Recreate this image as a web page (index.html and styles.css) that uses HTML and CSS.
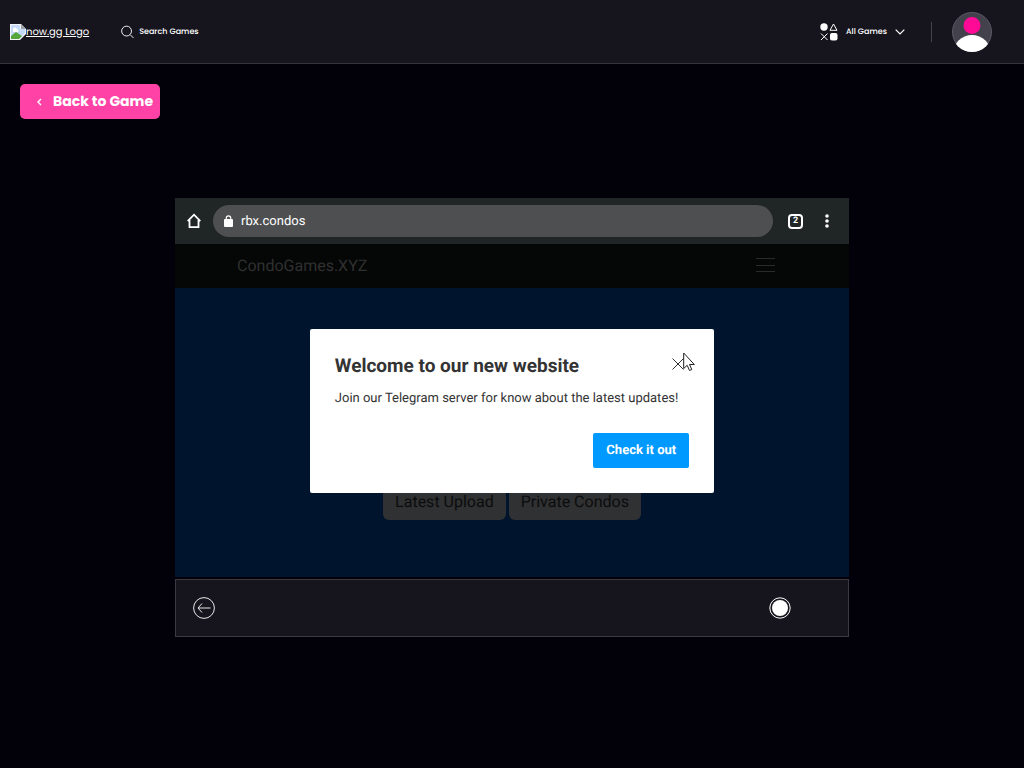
FILE: index.html
```html
<!DOCTYPE html>
<html lang="en">
<head>
<meta charset="UTF-8">
<meta name="viewport" content="width=device-width, initial-scale=1">
<title>now.gg</title>
<link rel="stylesheet" href="styles.css">
</head>
<body>
  <header class="topbar">
    <a class="logo" href="#">
      <svg width="16" height="16" viewBox="0 0 16 16" aria-hidden="true">
        <path d="M0 0h11l5 5v5l-6 6H0z" fill="#f1f3f4"/>
        <path d="M1 1h9v4h5v4l-6 6H1z" fill="#c3d9f5"/>
        <path d="M3 6a2 2 0 0 1 4-1 2 2 0 0 1 1 3H3z" fill="#fff"/>
        <path d="M1 15v-3l5-4 6 4-3 3z" fill="#57a63c"/>
        <path d="M11 0v5h5z" fill="#9aa0a6"/>
      </svg><span>now.gg Logo</span>
    </a>
    <label class="search">
      <svg width="13" height="14" viewBox="0 0 14 14" fill="none" stroke="#fff" aria-hidden="true">
        <circle cx="6" cy="6" r="5.3"/>
        <path d="M10 10l3.5 3.5"/>
      </svg>
      <input type="text" placeholder="Search Games" aria-label="Search Games">
    </label>
    <button class="all-games" type="button">
      <svg width="18" height="18" viewBox="0 0 18 18" aria-hidden="true">
        <circle cx="4" cy="4" r="3.7" fill="#fff"/>
        <path d="M13.5 1L17 7.3h-7z" fill="none" stroke="#fff" stroke-linejoin="round"/>
        <path d="M1 10.5l6.5 6.5M7.5 10.5L1 17" stroke="#fff"/>
        <rect x="10" y="10" width="7.5" height="7.5" rx="2" fill="#fff"/>
      </svg>
      All Games
      <svg width="10" height="6" viewBox="0 0 10 6" fill="none" stroke="#fff" stroke-width="1.2" aria-hidden="true">
        <path d="M.7.7L5 5 9.3.7"/>
      </svg>
    </button>
    <span class="divider"></span>
    <button class="avatar" type="button" aria-label="Account">
      <svg width="40" height="40" viewBox="0 0 40 40" aria-hidden="true">
        <clipPath id="avatar-clip"><circle cx="20" cy="20" r="20"/></clipPath>
        <circle cx="20" cy="20" r="19.5" fill="#43424c" stroke="#5b5a64"/>
        <circle cx="20" cy="13.5" r="8.5" fill="#ff0a96"/>
        <circle cx="20" cy="42" r="19" fill="#fff" clip-path="url(#avatar-clip)"/>
      </svg>
    </button>
  </header>

  <main>
    <a class="back" href="#">
      <svg width="5" height="8" viewBox="0 0 5 8" fill="none" stroke="#fff" stroke-width="1.4" aria-hidden="true">
        <path d="M4 1L1 4l3 3"/>
      </svg>
      Back to Game
    </a>

    <section class="player" aria-label="Game player">
      <div class="browser-bar">
        <button type="button" aria-label="Home">
          <svg width="14" height="16" viewBox="0 0 14 16" fill="none" stroke="#fff" stroke-width="1.8" aria-hidden="true">
            <path d="M.7 8.2L7 1.7l6.3 6.5M2.5 7v7.200h9V7"/>
          </svg>
        </button>
        <label class="address">
          <svg width="9" height="12" viewBox="0 0 9 12" aria-hidden="true">
            <rect y="4" width="9" height="8" rx="1" fill="#fff"/>
            <path d="M2.3 5V3a2.2 2.2 0 0 1 4.400 0v2" fill="none" stroke="#fff" stroke-width="1.2"/>
          </svg>
          <input type="text" value="rbx.condos" aria-label="Address">
        </label>
        <button class="tabs" type="button" aria-label="2 tabs">2</button>
        <button class="more" type="button" aria-label="More">
          <svg width="6" height="14" viewBox="0 0 6 14" fill="#fff" aria-hidden="true">
            <circle cx="3" cy="2" r="1.8"/>
            <circle cx="3" cy="7" r="1.8"/>
            <circle cx="3" cy="12" r="1.8"/>
          </svg>
        </button>
      </div>

      <div class="site">
        <nav class="site-nav">
          <a href="#">CondoGames.XYZ</a>
          <button type="button" aria-label="Menu">
            <svg width="19" height="14" viewBox="0 0 19 14" stroke="#292a29" aria-hidden="true">
              <path d="M0 .5h19M0 7.5h19M0 13.5h19"/>
            </svg>
          </button>
        </nav>
        <div class="hero">
          <button type="button">Latest Upload</button>
          <button type="button">Private Condos</button>
        </div>

        <!-- Welcome popup -->
        <div class="overlay">
          <div class="popup" role="dialog" aria-labelledby="popup-title">
            <div class="popup-head">
              <h2 id="popup-title">Welcome to our new website</h2>
              <button class="close" type="button" aria-label="Close">
                <svg width="12" height="12" viewBox="0 0 12 12" stroke="#333" aria-hidden="true">
                  <path d="M.5.5l11 11M11.5.5l-11 11"/>
                </svg>
                <svg class="cursor" width="12" height="20" viewBox="0 0 12 20" fill="#fff" stroke="#222" aria-hidden="true">
                  <path d="M.7 1v15.500l3.500-3.200 2.300 5.200 2.300-1-2.300-5h4.800z"/>
                </svg>
              </button>
            </div>
            <p>Join our Telegram server for know about the latest updates!</p>
            <button class="check" type="button">Check it out</button>
          </div>
        </div>
      </div>

      <div class="controls">
        <button type="button" aria-label="Back">
          <svg width="22" height="22" viewBox="0 0 22 22" fill="none" stroke="#e8e8ea" aria-hidden="true">
            <circle cx="11" cy="11" r="10.4"/>
            <path d="M17.5 11H5M9 6.5L5 11l4 4.500"/>
          </svg>
        </button>
        <button type="button" aria-label="Home screen">
          <svg width="22" height="22" viewBox="0 0 22 22" aria-hidden="true">
            <circle cx="11" cy="11" r="10.2" fill="none" stroke="#fff"/>
            <circle cx="11" cy="11" r="8" fill="#fff"/>
          </svg>
        </button>
      </div>
    </section>
  </main>
</body>
</html>
```

FILE: styles.css
```css
/* Base styles */
* {
  margin: 0;
  padding: 0;
  box-sizing: border-box;
}
body {
  font-family: Poppins, Inter, sans-serif;
  background: #020009;
  color: #fff;
  text-rendering: geometricPrecision;
}
button, input {
  font: inherit;
  color: inherit;
  background: none;
  border: none;
  text-rendering: inherit;
}
button {
  cursor: pointer;
}
svg {
  display: block;
  flex: none;
}

/* Top bar */
.topbar {
  display: flex;
  align-items: center;
  height: 64px;
  padding: 0 32px 0 10px;
  background: #16151d;
  border-bottom: 1px solid #35343c;
  font-size: 8px;
  font-weight: 500;
}
.logo {
  display: flex;
  align-items: center;
  color: #fff;
  font-size: 10px;
  font-weight: 400;
}
.search {
  display: flex;
  align-items: center;
  gap: 5px;
  flex: 1;
  margin-left: 32px;
}
.search input {
  flex: 1;
  min-width: 0;
}
.search input::placeholder {
  color: #fff;
  opacity: 1;
}
.all-games {
  display: flex;
  align-items: center;
  gap: 8px;
}
.divider {
  width: 1px;
  height: 20px;
  margin: 0 20px 0 26px;
  background: #45444d;
}

/* Back button */
.back {
  display: flex;
  align-items: center;
  gap: 11px;
  width: fit-content;
  height: 35px;
  margin: 20px 20px 79px;
  padding: 0 7px 0 17px;
  border-radius: 5px;
  background: #ff42a5;
  color: #fff;
  font-size: 14px;
  font-weight: 700;
  text-decoration: none;
}

/* Player */
.player {
  max-width: 674px;
  margin: 0 auto;
  font-family: Roboto, sans-serif;
}
.browser-bar {
  display: flex;
  align-items: center;
  height: 46px;
  padding: 0 19px 0 12px;
  background: #202526;
}
.address {
  display: flex;
  align-items: center;
  gap: 8px;
  flex: 1;
  height: 32px;
  margin: 0 15px 0 12px;
  padding: 0 11px;
  border-radius: 16px;
  background: #4e4f51;
  font-size: 13px;
}
.address input {
  flex: 1;
  min-width: 0;
}
.tabs {
  width: 15px;
  height: 15px;
  border: 2px solid #fff;
  border-radius: 4px;
  font-size: 9px;
  font-weight: 700;
  line-height: 11px;
}
.more {
  margin-left: 21px;
}

/* Site inside the player */
.site {
  position: relative;
}
.site-nav {
  display: flex;
  align-items: center;
  justify-content: space-between;
  height: 44px;
  padding: 0 74px 2px 62px;
  background: #050606;
}
.site-nav a {
  color: #303131;
  font-size: 16px;
  text-decoration: none;
}
.hero {
  display: flex;
  align-items: flex-end;
  justify-content: center;
  gap: 3px;
  min-height: 289px;
  padding-bottom: 57px;
  background: #00142e;
}
.hero button {
  height: 38px;
  padding: 0 12px;
  border-radius: 6px;
  background: #303132;
  color: #0b0c0d;
  font-size: 16px;
}

/* Popup */
.overlay {
  position: absolute;
  inset: 0;
  display: flex;
  align-items: center;
  justify-content: center;
}
.popup {
  display: flex;
  flex-direction: column;
  width: 60%;
  padding: 25px;
  border-radius: 2px;
  background: #fff;
  color: #333;
}
.popup-head {
  display: flex;
  align-items: center;
  justify-content: space-between;
}
.popup h2 {
  font-size: 19px;
  line-height: 24px;
}
.popup p {
  margin: 12px 0 25px;
  font-size: 13px;
  line-height: 18px;
}
.close {
  position: relative;
  margin: 0 5px 4px 0;
}
.cursor {
  position: absolute;
  top: -6px;
  left: 11px;
}
.check {
  align-self: flex-end;
  height: 35px;
  padding: 0 13px;
  border-radius: 2px;
  background: #0099ff;
  color: #fff;
  font-size: 13px;
  font-weight: 700;
}

/* Bottom controls */
.controls {
  display: flex;
  align-items: center;
  justify-content: space-between;
  height: 58px;
  margin-top: 2px;
  padding: 0 57px 0 17px;
  border: 1px solid #3b3a43;
  background: #16151d;
}
```
